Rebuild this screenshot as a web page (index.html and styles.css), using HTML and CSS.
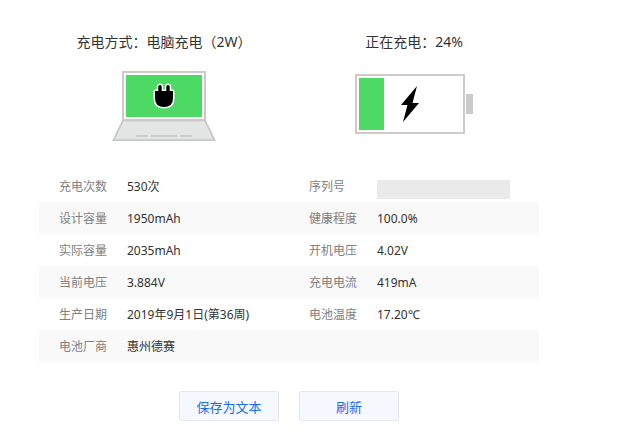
FILE: index.html
```html
<!DOCTYPE html>
<html lang="zh-CN">
<head>
  <meta charset="UTF-8" />
  <meta name="viewport" content="width=device-width, initial-scale=1.0"/>
  <title>电池详情</title>
  <link rel="stylesheet" href="styles.css">
</head>
<body>
  <main>
    <div class="status">
      <section class="status-item">
        <h2>充电方式：电脑充电（2W）</h2>
        <svg class="laptop" width="104" height="70" viewBox="0 0 104 70" aria-hidden="true">
          <path d="M11 49.5H93L102.5 69H1.5Z" fill="#e4e6e5" stroke="#cbcbcb" stroke-width="2"/>
          <rect x="11" y="1" width="82" height="48" fill="#fff" stroke="#cbcbcb" stroke-width="2"/>
          <rect x="14" y="4" width="76" height="42" fill="#4cd964"/>
          <path d="M24 65H36M39 65H65M68 65H80" stroke="#cbcbcb" stroke-width="2"/>
          <!-- plug -->
          <path d="M43 20H46.3V15.5Q46.3 14 48 14T49.7 15.5V20H54.3V15.5Q54.3 14 56 14T57.7 15.5V20H61V27Q61 36 52 36T43 27Z" fill="#000" stroke="#fff" stroke-width="3" stroke-linejoin="round" paint-order="stroke"/>
        </svg>
      </section>
      <section class="status-item">
        <h2>正在充电：24%</h2>
        <svg class="battery" width="118" height="60" viewBox="0 0 118 60" aria-hidden="true">
          <rect x="1" y="1" width="108" height="58" fill="#fff" stroke="#cbcbcb" stroke-width="2"/>
          <rect x="4" y="4" width="25" height="52" fill="#4cd964"/>
          <rect x="111" y="20" width="7" height="20" fill="#cbcbcb"/>
          <path d="M62 12L46 31H52.5L48 48L64 29H57.5Z" fill="#000"/>
        </svg>
      </section>
    </div>

    <table class="info">
      <tr>
        <th scope="row">充电次数</th><td>530次</td>
        <th scope="row">序列号</th><td><span class="serial"></span></td>
      </tr>
      <tr>
        <th scope="row">设计容量</th><td>1950mAh</td>
        <th scope="row">健康程度</th><td>100.0%</td>
      </tr>
      <tr>
        <th scope="row">实际容量</th><td>2035mAh</td>
        <th scope="row">开机电压</th><td>4.02V</td>
      </tr>
      <tr>
        <th scope="row">当前电压</th><td>3.884V</td>
        <th scope="row">充电电流</th><td>419mA</td>
      </tr>
      <tr>
        <th scope="row">生产日期</th><td>2019年9月1日(第36周)</td>
        <th scope="row">电池温度</th><td>17.20℃</td>
      </tr>
      <tr>
        <th scope="row">电池厂商</th><td>惠州德赛</td>
        <td></td><td></td>
      </tr>
    </table>

    <div class="actions">
      <button type="button">保存为文本</button>
      <button type="button">刷新</button>
    </div>
  </main>
</body>
</html>
```

FILE: styles.css
```css
body {
  margin: 0;
  background: #fff;
  color: #333;
  font-family: "Noto Sans", "Noto Sans CJK SC", sans-serif;
  font-size: 12px;
}

main {
  padding: 32px 81px 10px 39px;
}

.status {
  display: grid;
  grid-template-columns: 1fr 1fr;
}

.status-item {
  display: flex;
  flex-direction: column;
  align-items: center;
}

.status-item h2 {
  margin: 0;
  font-size: 14px;
  font-weight: normal;
  line-height: 20px;
  white-space: nowrap;
}

.laptop {
  margin-top: 19px;
}

.battery {
  margin-top: 22px;
}

.info {
  width: 100%;
  margin-top: 29px;
  border-collapse: collapse;
  table-layout: fixed;
}

.info tr:nth-child(even) {
  background: #f9f9f9;
}

.info th,
.info td {
  box-sizing: border-box;
  height: 32px;
  padding: 2px 0 0;
  line-height: 20px;
  text-align: left;
  white-space: nowrap;
}

.info th {
  width: 88px;
  padding-left: 20px;
  color: #808080;
  font-weight: normal;
}

.serial {
  display: block;
  width: 133px;
  height: 19px;
  margin-top: 5px;
  background: #eaeaea;
}

.actions {
  display: flex;
  justify-content: center;
  gap: 20px;
  margin-top: 29px;
}

.actions button {
  width: 100px;
  height: 30px;
  padding: 0;
  border: 1px solid #e4e7ed;
  border-radius: 2px;
  background: #f5f8ff;
  color: #1a6dea;
  font-family: inherit;
  font-size: 13px;
  cursor: pointer;
}
```
